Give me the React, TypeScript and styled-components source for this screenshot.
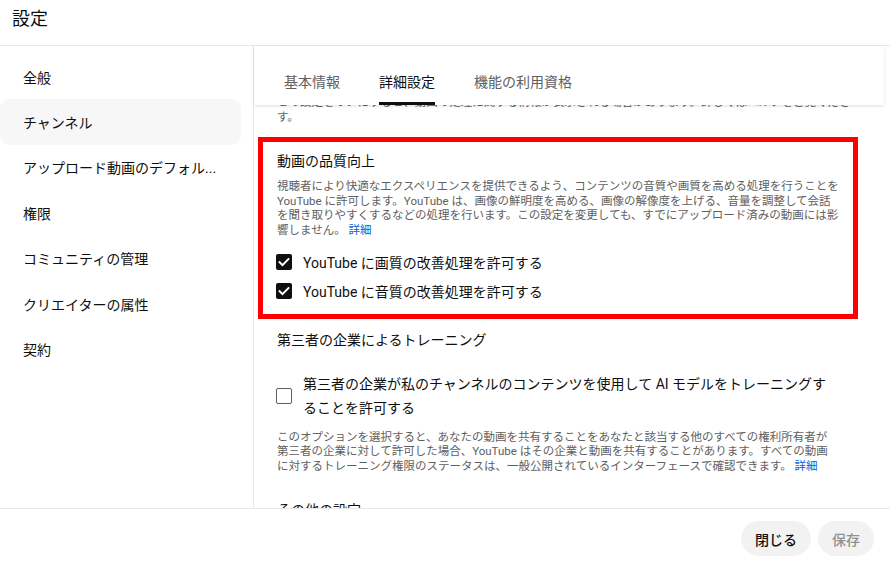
import styled, { createGlobalStyle } from 'styled-components';

const GlobalStyle = createGlobalStyle`
  html, body {
    margin: 0;
    padding: 0;
    background: #ffffff;
  }
  body {
    font-family: Roboto, "Noto Sans CJK JP", sans-serif;
    color: #0f0f0f;
  }
  * {
    box-sizing: border-box;
  }
`;

type activeType = {
  $active?: boolean;
};

type mutedType = {
  $muted?: boolean;
};

const navItems = [
  '全般',
  'チャンネル',
  'アップロード動画のデフォル...',
  '権限',
  'コミュニティの管理',
  'クリエイターの属性',
  '契約',
];

const tabs = ['基本情報', '詳細設定', '機能の利用資格'];

function CheckMark() {
  return (
    <svg width="16" height="16" viewBox="0 0 16 16" fill="none">
      <path d="M3.6 8.2l2.9 2.9 5.9-6" stroke="#ffffff" strokeWidth="2" strokeLinecap="square" />
    </svg>
  );
}

export default function App() {
  return (
    <>
      <GlobalStyle />
      <Dialog>
        <Header>設定</Header>
        <Body>
          <Sidebar>
            {navItems.map((item) => (
              <NavItem key={item} $active={item === 'チャンネル'}>
                {item}
              </NavItem>
            ))}
          </Sidebar>
          <Main>
            <TabBar>
              {tabs.map((tab) => (
                <Tab key={tab} $active={tab === '詳細設定'}>
                  {tab}
                </Tab>
              ))}
            </TabBar>
            <Scroller>
              <CutText>
                この設定をオンにすると、動画の処理に関する情報が表示される場合があります。詳しくはヘルプをご覧くださ
                <br />
                す。
              </CutText>

              <HighlightBox>
                <SectionTitle>動画の品質向上</SectionTitle>
                <Description $top={8} $lineHeight={14.7}>
                  視聴者により快適なエクスペリエンスを提供できるよう、コンテンツの音質や画質を高める処理を行うことを
                  <br />
                  YouTube に許可します。YouTube は、画像の鮮明度を高める、画像の解像度を上げる、音量を調整して会話
                  <br />
                  を聞き取りやすくするなどの処理を行います。この設定を変更しても、すでにアップロード済みの動画には影
                  <br />
                  響しません。 <Link>詳細</Link>
                </Description>
                <CheckList>
                  <CheckRow>
                    <CheckBox $checked>
                      <CheckMark />
                    </CheckBox>
                    <CheckLabel>YouTube に画質の改善処理を許可する</CheckLabel>
                  </CheckRow>
                  <CheckRow>
                    <CheckBox $checked>
                      <CheckMark />
                    </CheckBox>
                    <CheckLabel>YouTube に音質の改善処理を許可する</CheckLabel>
                  </CheckRow>
                </CheckList>
              </HighlightBox>

              <Section>
                <SectionTitle $top={11}>第三者の企業によるトレーニング</SectionTitle>
                <WrapRow>
                  <CheckBox />
                  <WrapLabel>
                    第三者の企業が私のチャンネルのコンテンツを使用して AI モデルをトレーニングす
                    <br />
                    ることを許可する
                  </WrapLabel>
                </WrapRow>
                <Description $top={9.5} $lineHeight={14.5}>
                  このオプションを選択すると、あなたの動画を共有することをあなたと該当する他のすべての権利所有者が
                  <br />
                  第三者の企業に対して許可した場合、YouTube はその企業と動画を共有することがあります。すべての動画
                  <br />
                  に対するトレーニング権限のステータスは、一般公開されているインターフェースで確認できます。 <Link>詳細</Link>
                </Description>
                <SectionTitle $top={27}>その他の設定</SectionTitle>
              </Section>
            </Scroller>
          </Main>
        </Body>
        <Footer>
          <FooterButton>閉じる</FooterButton>
          <FooterButton $muted>保存</FooterButton>
        </Footer>
      </Dialog>
    </>
  );
}

const Dialog = styled.div`
  display: flex;
  flex-direction: column;
  width: 890px;
  height: 564px;
  overflow: hidden;
`;

const Header = styled.div`
  display: flex;
  align-items: center;
  height: 46px;
  padding: 0 0 11px 12px;
  font-size: 18px;
  border-bottom: 1px solid #e8e8e8;
`;

const Body = styled.div`
  display: flex;
  flex: 1;
  min-height: 0;
`;

const Sidebar = styled.nav`
  width: 254px;
  flex-shrink: 0;
  padding: 8px 12px 0 0;
  border-right: 1px solid #e8e8e8;
`;

const NavItem = styled.div<activeType>`
  display: flex;
  align-items: center;
  height: 45.4px;
  padding-left: 23px;
  font-size: 14px;
  border-radius: 10px;
  background: ${(props) => (props.$active ? '#f7f7f7' : 'transparent')};
`;

const Main = styled.div`
  display: flex;
  flex-direction: column;
  flex: 1;
  min-width: 0;
`;

const TabBar = styled.div`
  position: relative;
  z-index: 1;
  display: flex;
  gap: 39px;
  height: 59px;
  padding: 12px 0 0 30px;
  margin-right: 6px;
  background: #ffffff;
  box-shadow: 0 1px 3px rgba(0, 0, 0, 0.13);
`;

const Tab = styled.div<activeType>`
  display: flex;
  align-items: center;
  height: 47px;
  padding-top: 2px;
  font-size: 14px;
  color: ${(props) => (props.$active ? '#0f0f0f' : '#606060')};
  border-bottom: 3px solid ${(props) => (props.$active ? '#0f0f0f' : 'transparent')};
`;

const Scroller = styled.div`
  flex: 1;
  overflow: hidden;
`;

const CutText = styled.p`
  margin: -10px 0 0;
  padding: 0 48px 0 23px;
  font-size: 11.5px;
  line-height: 15px;
  color: #606060;
  white-space: nowrap;
`;

const HighlightBox = styled.div`
  margin: 12px 32px 0 4px;
  padding: 9px 10px 8.25px 14px;
  border: 5px solid #ff0000;
`;

const Section = styled.div`
  padding: 0 48px 0 23px;
`;

const SectionTitle = styled.div<{ $top?: number }>`
  margin-top: ${(props) => props.$top ?? 0}px;
  font-size: 14px;
  line-height: 20px;
`;

const Description = styled.p<{ $top: number; $lineHeight: number }>`
  margin: ${(props) => props.$top}px 0 0;
  font-size: 11.5px;
  line-height: ${(props) => props.$lineHeight}px;
  color: #606060;
  white-space: nowrap;
`;

const Link = styled.span`
  color: #065fd4;
`;

const CheckList = styled.div`
  display: flex;
  flex-direction: column;
  margin-top: 9px;
`;

const CheckRow = styled.div`
  display: flex;
  align-items: center;
  gap: 11px;
  height: 29.5px;
  margin-left: -1px;
`;

const CheckBox = styled.div<{ $checked?: boolean }>`
  display: flex;
  align-items: center;
  justify-content: center;
  flex-shrink: 0;
  width: 16px;
  height: 16px;
  border-radius: 2px;
  background: ${(props) => (props.$checked ? '#0f0f0f' : '#ffffff')};
  border: ${(props) => (props.$checked ? 'none' : '1.5px solid #606060')};
`;

const CheckLabel = styled.span`
  font-size: 14px;
`;

const WrapRow = styled(CheckRow)`
  height: auto;
  margin-top: 22px;
`;

const WrapLabel = styled.span`
  font-size: 14px;
  line-height: 24px;
  white-space: nowrap;
`;

const Footer = styled.div`
  display: flex;
  justify-content: flex-end;
  align-items: flex-start;
  gap: 7px;
  height: 56px;
  padding: 12px 16px 0 0;
  border-top: 1px solid #e8e8e8;
  flex-shrink: 0;
`;

const FooterButton = styled.button<mutedType>`
  height: 35px;
  padding: 0 14px;
  border: none;
  border-radius: 18px;
  background: #f2f2f2;
  font-family: Roboto, "Noto Sans CJK JP", sans-serif;
  font-size: 14px;
  font-weight: 500;
  color: ${(props) => (props.$muted ? '#909090' : '#0f0f0f')};
`;
